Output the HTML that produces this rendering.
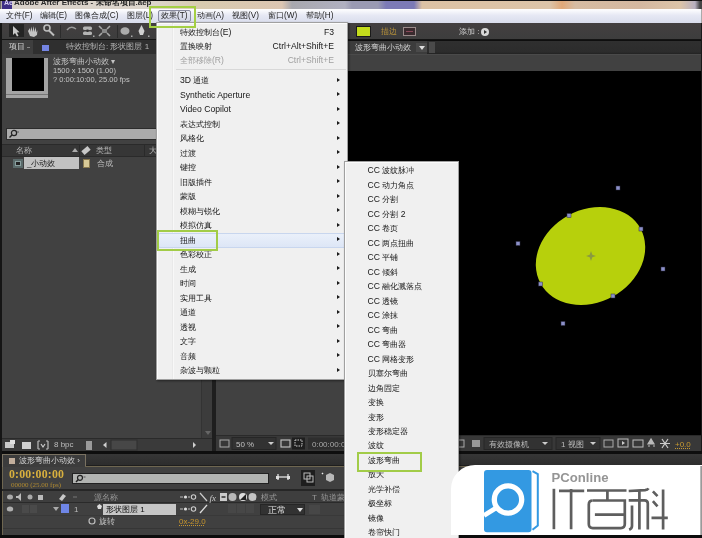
<!DOCTYPE html>
<html><head><meta charset="utf-8">
<style>
*{margin:0;padding:0;box-sizing:border-box}
html,body{width:702px;height:538px;overflow:hidden;background:#262626;font-family:"Liberation Sans",sans-serif}
body{will-change:transform}
.a{position:absolute}
.t{position:absolute;white-space:nowrap;line-height:1}
.mb{position:absolute;white-space:nowrap;line-height:10px;font-size:8.2px;color:#1e1e1e;top:11px}
.mb .c{font-size:8px}
.pan{background:#414141}
.menu{background:#f0f0f0;border:1px solid #a0a0a0;box-shadow:inset 1px 1px 0 #fcfcfc,1px 1px 2px rgba(0,0,0,.45)}
.mt{position:absolute;white-space:nowrap;line-height:10px;font-size:8.6px;color:#161616}
.c{font-size:7.7px}
.arr{position:absolute;width:0;height:0;border-left:3px solid #1a1a1a;border-top:2.2px solid transparent;border-bottom:2.2px solid transparent}
.g{position:absolute;white-space:nowrap;line-height:10px;font-size:8px;color:#c4c4c4}
.g .c{font-size:7.5px}
.ic{position:absolute;background:#bdbdbd}
</style></head><body>
<!-- ============ TITLE BAR ============ -->
<div class="a" style="left:0;top:0;width:702px;height:9px;background:linear-gradient(90deg,#4a4a4a 0px,#d8d0c8 2px,#ddd6cc 150px,#d8cbb0 200px,#dcc6b2 282px,#a8a8ae 292px,#b0b0c0 345px,#9a9ab2 352px,#9a9ab2 378px,#7c7ab6 386px,#7c7ab6 414px,#dcc2a4 422px,#dcc4a8 550px,#e0a878 562px,#d6bca2 575px,#d4b8a0 640px,#dcc4a8 680px,#b8b0c0 695px,#444 700px)"></div>
<div class="a" style="left:0;top:0;width:702px;height:1px;background:#111"></div>
<div class="a" style="left:2px;top:1px;width:10px;height:8px;background:#3e2f86"></div>
<div class="t" style="left:4px;top:-1px;font-size:7px;color:#d8d0f0;font-weight:bold">Ae</div>
<div class="t" style="left:14px;top:-1.5px;font-size:8px;color:#2a2a2a;font-weight:bold">Adobe After Effects - <span style="font-size:7.5px">未命名项目</span>.aep</div>

<!-- ============ MENU BAR ============ -->
<div class="a" style="left:0;top:9px;width:702px;height:14px;background:linear-gradient(#ffffff,#e6e8f4 45%,#d9ddec)"></div>
<div class="a" style="left:701px;top:9px;width:1px;height:14px;background:#aaa"></div>
<div class="a" style="left:158px;top:10px;width:33px;height:12px;background:linear-gradient(#e8eaf4,#cfd3e4);border:1px solid #8a8ca0;border-radius:2px"></div>
<div class="mb" style="left:6px"><span class="c">文件</span>(F)</div>
<div class="mb" style="left:40px"><span class="c">编辑</span>(E)</div>
<div class="mb" style="left:75px"><span class="c">图像合成</span>(C)</div>
<div class="mb" style="left:127px"><span class="c">图层</span>(L)</div>
<div class="mb" style="left:161px"><span class="c">效果</span>(T)</div>
<div class="mb" style="left:197px"><span class="c">动画</span>(A)</div>
<div class="mb" style="left:232px"><span class="c">视图</span>(V)</div>
<div class="mb" style="left:268px"><span class="c">窗口</span>(W)</div>
<div class="mb" style="left:306px"><span class="c">帮助</span>(H)</div>

<!-- ============ TOOLBAR ============ -->
<div class="a" style="left:0;top:23px;width:702px;height:17px;background:linear-gradient(#433f40,#3d3d3d);border-bottom:1px solid #141414"></div>
<div class="a" style="left:9px;top:24px;width:15px;height:13px;background:#242424"></div>
<svg class="a" style="left:0;top:23px" width="160" height="17">
<path d="M13 3 L13 12 L15 10 L17 13.5 L18.5 12.8 L16.8 9.5 L19.5 9.3 Z" fill="#c8c8c8"/>
<path d="M28 8 L30 5 L30.5 9 L31.5 3.5 L32.5 9 L33.5 3 L34.5 9 L35.5 4 L36.5 9.5 L37.5 7 L37 12 L34 14 L30 13 Z" fill="#c4c4c4"/>
<circle cx="47" cy="5" r="3" stroke="#bdbdbd" stroke-width="1.6" fill="none"/>
<path d="M49 7.5 L54 12.5" stroke="#bdbdbd" stroke-width="2"/>
<rect x="60" y="2" width="1" height="13" fill="#2c2c2c"/>
<path d="M67 7 Q71 2 76 6" stroke="#9a9a9a" stroke-width="1.5" fill="none"/>
<rect x="83" y="3.5" width="9" height="3.5" rx="1.5" fill="#b4b4b4"/><rect x="83" y="8.5" width="9" height="3.5" rx="1.5" fill="#b4b4b4"/><rect x="86.5" y="6.5" width="2" height="2.5" fill="#333"/>
<path d="M99 3 l3 3 M110 3 l-3 3 M99 13 l3 -3 M110 13 l-3 -3" stroke="#a8a8a8" stroke-width="1.6"/>
<rect x="102" y="6" width="5" height="4" fill="#888"/>
<rect x="117" y="2" width="1" height="13" fill="#2c2c2c"/>
<ellipse cx="125" cy="8" rx="4.5" ry="3.8" fill="#ababab"/>
<path d="M141.5 2 L144.5 8 L143 12 L140 12 L138.5 8 Z" fill="#d0d0d0"/>
<rect x="93" y="12.5" width="1.5" height="1.5" fill="#aaa"/><rect x="131" y="12.5" width="1.5" height="1.5" fill="#aaa"/><rect x="148" y="12.5" width="1.5" height="1.5" fill="#aaa"/>
</svg>
<!-- right part of toolbar -->
<div class="a" style="left:356px;top:26px;width:15px;height:11px;background:#c4dc1c;border:1px solid #1a1a1a"></div>
<div class="t" style="left:381px;top:28px;font-size:7.5px;color:#b8923a">描边</div>
<div class="a" style="left:403px;top:27px;width:13px;height:9px;border:1px solid #9a8a8a;background:#3a2a2e"></div>
<div class="a" style="left:406px;top:31px;width:7px;height:1px;background:#8a4a5a"></div>
<div class="g" style="left:459px;top:27px;color:#cfcfcf"><span class="c" style="font-size:8px">添加</span> :</div>
<div class="a" style="left:481px;top:28px;width:8px;height:8px;border-radius:50%;background:#d8d8d8"></div>
<div class="a" style="left:484px;top:30px;width:0;height:0;border-left:3px solid #333;border-top:2px solid transparent;border-bottom:2px solid transparent"></div>

<div class="a" style="left:0;top:23px;width:2px;height:515px;background:#151515"></div>

<!-- ============ PROJECT PANEL ============ -->
<div class="a pan" style="left:2px;top:40px;width:210px;height:412px"></div>
<div class="a" style="left:2px;top:40px;width:210px;height:14px;background:#2f2f2f"></div>
<div class="a" style="left:2px;top:40px;width:31px;height:14px;background:#3e3e3e"></div>
<div class="g" style="left:9px;top:42px;color:#d4d4d4"><span class="c" style="font-size:8px">项目</span></div>
<div class="a" style="left:27px;top:47px;width:3px;height:1px;background:#888"></div>
<div class="a" style="left:42px;top:45px;width:7px;height:6px;background:#7484e2"></div>
<div class="g" style="left:66px;top:42px;color:#b4b4b4"><span class="c" style="font-size:8px">特效控制台: 形状图层</span> 1</div>
<!-- thumbnail -->
<div class="a" style="left:6px;top:58px;width:42px;height:40px;background:#a4a4a4"></div>
<div class="a" style="left:12px;top:58px;width:32px;height:33px;background:#000"></div>
<div class="a" style="left:6px;top:94px;width:42px;height:1px;background:#777"></div>
<div class="g" style="left:53px;top:57px"><span class="c" style="font-size:8px">波形弯曲小动效</span> ▾</div>
<div class="g" style="left:53px;top:66px;font-size:7.5px">1500 x 1500 (1.00)</div>
<div class="g" style="left:53px;top:74.5px;font-size:7.5px">? 0:00:10:00, 25.00 fps</div>
<!-- search -->
<div class="a" style="left:6px;top:128px;width:206px;height:12px;background:#ababab;border:1px solid #2c2c2c"></div>
<svg class="a" style="left:8px;top:129px" width="12" height="10"><circle cx="6" cy="4" r="2.6" stroke="#222" stroke-width="1.2" fill="none"/><path d="M4.2 5.8 L1.5 8.5" stroke="#222" stroke-width="1.4"/><path d="M9 3 h2" stroke="#555" stroke-width="1"/></svg>
<!-- column header -->
<div class="a" style="left:2px;top:144px;width:210px;height:13px;background:#363636;border-top:1px solid #2a2a2a;border-bottom:1px solid #2a2a2a"></div>
<div class="g" style="left:16px;top:146px;color:#b8b8b8"><span class="c">名称</span></div>
<div class="a" style="left:72px;top:148px;width:0;height:0;border-bottom:4px solid #aaa;border-left:3px solid transparent;border-right:3px solid transparent"></div>
<div class="a" style="left:79px;top:145px;width:1px;height:11px;background:#2a2a2a"></div>
<div class="a" style="left:82px;top:148px;width:8px;height:5px;background:#c8c8c8;transform:rotate(-40deg)"></div>
<div class="g" style="left:96px;top:146px;color:#b8b8b8"><span class="c">类型</span></div>
<div class="a" style="left:144px;top:145px;width:1px;height:11px;background:#2a2a2a"></div>
<div class="g" style="left:149px;top:146px;color:#b8b8b8"><span class="c">大</span></div>
<!-- row -->
<div class="a" style="left:13px;top:159px;width:10px;height:9px;background:#8aa0a0;border:2px solid #5a6a6a"></div>
<div class="a" style="left:16px;top:162px;width:4px;height:3px;background:#222"></div>
<div class="a" style="left:24px;top:157px;width:55px;height:12px;background:#c2c2c2"></div>
<div class="g" style="left:27px;top:158.5px;color:#1a1a1a"><span class="c" style="font-size:8px">_小动效</span></div>
<div class="a" style="left:83px;top:159px;width:7px;height:9px;background:#d8ca98;border:1px solid #8a7a50"></div>
<div class="g" style="left:97px;top:158.5px;color:#bcbcbc"><span class="c" style="font-size:8px">合成</span></div>
<!-- bottom bar -->
<div class="a" style="left:2px;top:438px;width:210px;height:14px;background:#3a3a3a;border-top:1px solid #2a2a2a"></div>
<div class="a" style="left:201px;top:54px;width:11px;height:384px;background:#3c3c3c;border-left:1px solid #333"></div>
<div class="a" style="left:205px;top:431px;width:0;height:0;border-top:4px solid #666;border-left:3px solid transparent;border-right:3px solid transparent"></div>
<svg class="a" style="left:2px;top:438px" width="210" height="14">
<rect x="3" y="4" width="9" height="6" fill="#c8c8c8"/><rect x="8" y="2" width="5" height="4" fill="#e0e0e0"/>
<rect x="20" y="4" width="9" height="7" fill="#cfcfcf"/>
<path d="M36 3 v8 M36 3 h2 M36 11 h2 M46 3 v8 M46 3 h-2 M46 11 h-2" stroke="#bbb" stroke-width="1.2"/><path d="M39 6 l2 3 l2 -3" stroke="#ccc" stroke-width="1.2" fill="none"/>
<rect x="84" y="3" width="6" height="9" fill="#9a9a9a"/>
<path d="M101 7 l3.5 -3 v6 z" fill="#cfcfcf"/>
<rect x="109" y="2" width="26" height="10" fill="#474747" stroke="#2e2e2e" stroke-width="1"/>
<path d="M191 4 l3 3 l-3 3 z" fill="#cfcfcf"/>
</svg>
<div class="g" style="left:54px;top:440px;color:#bdbdbd">8 bpc</div>
<div class="a" style="left:212px;top:40px;width:4px;height:412px;background:#1e1e1e"></div>

<!-- ============ COMP PANEL ============ -->
<div class="a pan" style="left:216px;top:40px;width:486px;height:396px"></div>
<div class="a" style="left:216px;top:40px;width:486px;height:14px;background:linear-gradient(#0e0e0e 0,#0e0e0e 1px,#2f2f2f 1px,#2c2c2c 12px,#222 14px)"></div>
<div class="a" style="left:216px;top:54px;width:486px;height:1px;background:#4a4a4a"></div>
<div class="a" style="left:348px;top:41px;width:79px;height:13px;background:#3c3c3c"></div>
<div class="g" style="left:355px;top:43px;color:#d2d2d2"><span class="c" style="font-size:8px">波形弯曲小动效</span></div>
<div class="a" style="left:416px;top:43px;width:11px;height:9px;background:#4a4a4a"></div>
<div class="a" style="left:419px;top:46px;width:0;height:0;border-top:4px solid #ddd;border-left:3px solid transparent;border-right:3px solid transparent"></div>
<div class="a" style="left:429px;top:42px;width:6px;height:11px;background:#4a4a4a"></div>
<div class="a" style="left:346px;top:71px;width:356px;height:364px;background:#000"></div>
<!-- comp bottom toolbar -->
<div class="a" style="left:216px;top:435px;width:486px;height:16px;background:#383838;border-top:1px solid #2a2a2a"></div>
<svg class="a" style="left:216px;top:436px" width="486" height="15">
<rect x="4" y="4" width="9" height="7" fill="none" stroke="#aaa" stroke-width="1"/>
<rect x="16" y="1.5" width="44" height="12" fill="#323232" stroke="#262626"/>
<path d="M52 6 l3 3 l3 -3 z" fill="#ccc"/>
<rect x="65" y="4" width="9" height="7" fill="none" stroke="#bbb" stroke-width="1.2"/>
<rect x="76" y="1.5" width="13" height="12" fill="#1e1e1e"/>
<rect x="79" y="4" width="7" height="6" fill="none" stroke="#ccc" stroke-width="1" stroke-dasharray="1.5 1"/>
<rect x="92" y="1.5" width="40" height="12" fill="#2e2e2e"/>
<rect x="241" y="4" width="7" height="7" fill="none" stroke="#aaa" stroke-width="1"/>
<rect x="256" y="4" width="8" height="7" fill="#999"/>
<rect x="268" y="1.5" width="68" height="12" fill="#323232" stroke="#262626"/>
<path d="M326 6 l3 3 l3 -3 z" fill="#ccc"/>
<rect x="340" y="1.5" width="44" height="12" fill="#323232" stroke="#262626"/>
<path d="M374 6 l3 3 l3 -3 z" fill="#ccc"/>
<rect x="388" y="4" width="9" height="7" fill="none" stroke="#aaa" stroke-width="1"/>
<rect x="402" y="3" width="10" height="8" fill="none" stroke="#bbb" stroke-width="1"/>
<path d="M406 5 l3 2 l-3 2 z" fill="#ccc"/>
<rect x="417" y="4" width="10" height="7" fill="none" stroke="#bbb" stroke-width="1"/>
<path d="M435 3 l-3 5 h6 z M432 10 h2 M437 10 h2" stroke="#bbb" stroke-width="1.2" fill="#bbb"/>
<path d="M446 3 l6 9 M452 3 l-6 9 M444 7.5 h10" stroke="#ccc" stroke-width="1.2"/>
</svg>
<div class="g" style="left:236px;top:440px;color:#c0c0c0">50 %</div>
<div class="g" style="left:312px;top:440px;color:#a8a8a8">0:00:00:0</div>
<div class="g" style="left:489px;top:440px;color:#bcbcbc"><span class="c" style="font-size:8px">有效摄像机</span></div>
<div class="g" style="left:561px;top:440px;color:#bcbcbc">1 <span class="c" style="font-size:8px">视图</span></div>
<div class="g" style="left:675px;top:440px;color:#c89a30;text-decoration:underline dotted">+0.0</div>
<div class="a" style="left:701px;top:23px;width:1px;height:442px;background:#1a1a1a"></div>

<!-- ============ TIMELINE ============ -->
<div class="a" style="left:2px;top:451px;width:700px;height:3px;background:#0e0e0e"></div>
<div class="a" style="left:2px;top:454px;width:700px;height:12px;background:linear-gradient(#363636,#2c2c2c)"></div>
<div class="a" style="left:86px;top:465px;width:616px;height:1px;background:#1e1e1e"></div>
<div class="a" style="left:2px;top:454px;width:84px;height:13px;background:#3c3c3c;border:1px solid #7a7262;border-bottom:none"></div>
<div class="a" style="left:9px;top:458px;width:6px;height:6px;background:#c2ae9c"></div>
<div class="g" style="left:19px;top:456px;color:#d0d0d0"><span class="c" style="font-size:8px">波形弯曲小动效</span> ›</div>
<div class="a" style="left:85px;top:466px;width:617px;height:1px;background:#6e6650"></div>
<div class="a" style="left:2px;top:467px;width:698px;height:68px;background:#404040;border-left:1px solid #6e6650"></div>
<div class="a" style="left:3px;top:528px;width:697px;height:1px;background:#363636"></div>
<div class="a" style="left:3px;top:515px;width:697px;height:1px;background:#393939"></div>
<div class="t" style="left:9px;top:469px;font-size:11.8px;font-family:'Liberation Serif',serif;font-weight:bold;color:#d8b03e;letter-spacing:0.2px">0:00:00:00</div>
<div class="t" style="left:11px;top:481.5px;font-size:7px;font-family:'Liberation Serif',serif;color:#b08a30">00000 (25.00 fps)</div>
<div class="a" style="left:72px;top:473px;width:197px;height:11px;background:#b2b4b2;border:1px solid #222"></div>
<svg class="a" style="left:74px;top:474px" width="14" height="9"><circle cx="6" cy="3.8" r="2.5" stroke="#222" stroke-width="1.2" fill="none"/><path d="M4.3 5.5 L2 8" stroke="#222" stroke-width="1.4"/><path d="M9.5 3 h2" stroke="#555"/></svg>
<svg class="a" style="left:270px;top:468px" width="70" height="20">
<path d="M8 6 v6 M18 6 v6 M8 9 h10" stroke="#ccc" stroke-width="1.5"/><rect x="6" y="8" width="3" height="3" fill="#ddd"/><rect x="17" y="8" width="3" height="3" fill="#ddd"/>
<rect x="31" y="2" width="14" height="16" fill="#1e1e1e"/>
<rect x="34" y="5" width="6" height="6" fill="none" stroke="#bbb"/><rect x="37" y="8" width="6" height="6" fill="none" stroke="#bbb"/>
<path d="M52 5 l1 1" stroke="#eee" stroke-width="1.5"/>
<path d="M56 7 l4 -2 l4 2 v5 l-4 2 l-4 -2 z" fill="#b8b8b8"/>
</svg>
<div class="a" style="left:2px;top:489px;width:698px;height:2px;background:#262626"></div>
<div class="a" style="left:3px;top:491px;width:697px;height:12px;background:#3e3e3e;border-bottom:1px solid #2a2a2a"></div>
<svg class="a" style="left:2px;top:491px" width="345" height="44">
<ellipse cx="8" cy="6" rx="3" ry="2.5" fill="#aaa"/>
<path d="M14 5 h2 l3 -3 v8 l-3 -3 h-2 z" fill="#bbb"/>
<circle cx="28" cy="6" r="2.5" fill="#aaa"/>
<rect x="36" y="4" width="5" height="5" fill="#bbb"/>
<path d="M57 8 l4 -5 l3 2 l-4 5 z" fill="#c8c8c8"/>
<path d="M71 6 h4" stroke="#777"/>
<path d="M178 6 h3 M186 6 h2" stroke="#bbb" stroke-width="1"/><circle cx="183.5" cy="6" r="1.6" fill="#ddd"/>
<circle cx="191.5" cy="6" r="2.2" fill="none" stroke="#ccc" stroke-width="1.1"/>
<path d="M198 2 l7 8" stroke="#ccc" stroke-width="1.2"/>
<text x="207.5" y="9.5" font-size="9" font-style="italic" fill="#ccc" font-family="Liberation Serif">fx</text>
<rect x="218" y="2" width="7" height="8" fill="#ccc"/><rect x="219.5" y="5" width="4" height="2" fill="#555"/>
<circle cx="230.5" cy="6" r="4" fill="#b8b8b8"/><circle cx="241" cy="6" r="4" fill="#ddd"/><path d="M238 9 l6 -6 v6 z" fill="#222"/><circle cx="250.5" cy="6" r="4" fill="#c4c4c4"/>
<!-- layer row -->
<ellipse cx="8" cy="18" rx="3.2" ry="2.5" fill="#b0b0b0"/>
<rect x="20" y="14" width="7" height="8" fill="#4a4a4a"/><rect x="28" y="14" width="7" height="8" fill="#4a4a4a"/>
<path d="M51 16 l3 4 l3 -4 z" fill="#aaa"/>
<rect x="59" y="13" width="8" height="9" fill="#6f86e6"/>
<path d="M95 15 l2.5 -2 l2.5 2 l-1 3 h-3 z" fill="#ddd"/>
<path d="M178 18 h3 M186 18 h2" stroke="#bbb" stroke-width="1"/><circle cx="183.5" cy="18" r="1.6" fill="#ddd"/>
<circle cx="191.5" cy="18" r="2.2" fill="none" stroke="#ccc" stroke-width="1.1"/>
<path d="M198 22 l7 -8" stroke="#ddd" stroke-width="1.3"/>
<rect x="226" y="13" width="8" height="9" fill="#474747"/><rect x="235" y="13" width="8" height="9" fill="#474747"/><rect x="244" y="13" width="8" height="9" fill="#474747"/>
<circle cx="90" cy="30" r="3" fill="none" stroke="#bbb" stroke-width="1.2"/>
</svg>
<div class="g" style="left:94px;top:493px;color:#9a9a9a"><span class="c">源名称</span></div>
<div class="g" style="left:261px;top:493px;color:#9a9a9a"><span class="c">模式</span></div>
<div class="g" style="left:312px;top:493px;color:#9a9a9a">T &nbsp;<span class="c">轨道蒙版</span></div>
<div class="g" style="left:74px;top:505px;color:#bbb">1</div>
<div class="a" style="left:103px;top:504px;width:73px;height:11px;background:#c6c6c6"></div>
<div class="g" style="left:106px;top:505px;color:#111"><span class="c" style="font-size:8px">形状图层</span> 1</div>
<div class="a" style="left:260px;top:504px;width:45px;height:11px;background:#323232;border:1px solid #262626"></div>
<div class="g" style="left:268px;top:505px;color:#ddd"><span class="c" style="font-size:8.5px">正常</span></div>
<div class="a" style="left:297px;top:508px;width:0;height:0;border-top:4px solid #ddd;border-left:3px solid transparent;border-right:3px solid transparent"></div>
<div class="a" style="left:309px;top:505px;width:11px;height:9px;background:#474747"></div>
<div class="g" style="left:99px;top:517px;color:#c8c8c8"><span class="c" style="font-size:8px">旋转</span></div>
<div class="g" style="left:179px;top:517px;color:#c8962c;text-decoration:underline dotted">0x-29.0</div>
<div class="a" style="left:0;top:535px;width:702px;height:3px;background:#0c0c0c"></div>

<!-- ============ ELLIPSE ============ -->
<svg class="a" style="left:0;top:0" width="702" height="538">
<ellipse cx="590.5" cy="256" rx="57" ry="46.3" transform="rotate(-28.8 590.5 256)" fill="#b7d00c"/>
<g fill="#8c90c8" stroke="#2a2a40" stroke-width="0.5">
<rect x="616" y="186" width="4" height="4"/><rect x="661" y="267" width="4" height="4"/>
<rect x="561" y="321.5" width="4" height="4"/><rect x="516" y="241.5" width="4" height="4"/>
<rect x="639" y="227" width="4" height="4"/><rect x="611" y="294" width="4" height="4"/>
<rect x="538.5" y="282" width="4" height="4"/><rect x="567" y="213.5" width="4" height="4"/>
</g>
<path d="M591 251 l1.3 3.7 l3.7 1.3 l-3.7 1.3 l-1.3 3.7 l-1.3 -3.7 l-3.7 -1.3 l3.7 -1.3 z" fill="#8a9a40"/>
</svg>

<!-- ============ MAIN MENU ============ -->
<div class="a menu" style="left:156px;top:22px;width:192px;height:358px"></div>
<div class="a" style="left:172px;top:23px;width:1px;height:356px;background:#e9e9e9"></div><div class="a" style="left:173px;top:23px;width:1px;height:356px;background:#f8f8f8"></div>
<div class="a" style="left:176px;top:69px;width:170px;height:1px;background:#d8d8d8"></div>
<div class="a" style="left:158px;top:233px;width:188px;height:15px;background:linear-gradient(#eaf0fa,#dde6f6);border:1px solid #c8d6ee;border-radius:2px"></div>
<!-- ============ SUBMENU ============ -->
<div class="a menu" style="left:344px;top:161px;width:115px;height:380px"></div>

<div class="mt" style="left:180px;top:26.5px"><span class="c">特效控制台</span>(E)</div>
<div class="mt" style="right:368px;top:26.5px">F3</div>
<div class="mt" style="left:180px;top:40.8px"><span class="c">置换映射</span></div>
<div class="mt" style="right:368px;top:40.8px">Ctrl+Alt+Shift+E</div>
<div class="mt" style="left:180px;top:55.3px;color:#a0a0a0"><span class="c">全部移除</span>(R)</div>
<div class="mt" style="right:368px;top:55.3px;color:#a0a0a0">Ctrl+Shift+E</div>
<div class="mt" style="left:180px;top:75.0px">3D <span class="c">通道</span></div>
<div class="arr" style="left:337px;top:77.6px"></div>
<div class="mt" style="left:180px;top:89.5px">Synthetic Aperture</div>
<div class="arr" style="left:337px;top:92.1px"></div>
<div class="mt" style="left:180px;top:104.0px">Video Copilot</div>
<div class="arr" style="left:337px;top:106.6px"></div>
<div class="mt" style="left:180px;top:118.5px"><span class="c">表达式控制</span></div>
<div class="arr" style="left:337px;top:121.1px"></div>
<div class="mt" style="left:180px;top:133.0px"><span class="c">风格化</span></div>
<div class="arr" style="left:337px;top:135.6px"></div>
<div class="mt" style="left:180px;top:147.5px"><span class="c">过渡</span></div>
<div class="arr" style="left:337px;top:150.1px"></div>
<div class="mt" style="left:180px;top:162.0px"><span class="c">键控</span></div>
<div class="arr" style="left:337px;top:164.6px"></div>
<div class="mt" style="left:180px;top:176.5px"><span class="c">旧版插件</span></div>
<div class="arr" style="left:337px;top:179.1px"></div>
<div class="mt" style="left:180px;top:191.0px"><span class="c">蒙版</span></div>
<div class="arr" style="left:337px;top:193.6px"></div>
<div class="mt" style="left:180px;top:205.5px"><span class="c">模糊与锐化</span></div>
<div class="arr" style="left:337px;top:208.1px"></div>
<div class="mt" style="left:180px;top:220.0px"><span class="c">模拟仿真</span></div>
<div class="arr" style="left:337px;top:222.6px"></div>
<div class="mt" style="left:180px;top:234.5px"><span class="c">扭曲</span></div>
<div class="arr" style="left:337px;top:237.1px"></div>
<div class="mt" style="left:180px;top:249.0px"><span class="c">色彩校正</span></div>
<div class="arr" style="left:337px;top:251.6px"></div>
<div class="mt" style="left:180px;top:263.5px"><span class="c">生成</span></div>
<div class="arr" style="left:337px;top:266.1px"></div>
<div class="mt" style="left:180px;top:278.0px"><span class="c">时间</span></div>
<div class="arr" style="left:337px;top:280.6px"></div>
<div class="mt" style="left:180px;top:292.5px"><span class="c">实用工具</span></div>
<div class="arr" style="left:337px;top:295.1px"></div>
<div class="mt" style="left:180px;top:307.0px"><span class="c">通道</span></div>
<div class="arr" style="left:337px;top:309.6px"></div>
<div class="mt" style="left:180px;top:321.5px"><span class="c">透视</span></div>
<div class="arr" style="left:337px;top:324.1px"></div>
<div class="mt" style="left:180px;top:336.0px"><span class="c">文字</span></div>
<div class="arr" style="left:337px;top:338.6px"></div>
<div class="mt" style="left:180px;top:350.5px"><span class="c">音频</span></div>
<div class="arr" style="left:337px;top:353.1px"></div>
<div class="mt" style="left:180px;top:365.0px"><span class="c">杂波与颗粒</span></div>
<div class="arr" style="left:337px;top:367.6px"></div>
<div class="mt" style="left:367.5px;top:165.3px">CC <span class="c">波纹脉冲</span></div>
<div class="mt" style="left:367.5px;top:179.8px">CC <span class="c">动力角点</span></div>
<div class="mt" style="left:367.5px;top:194.3px">CC <span class="c">分割</span></div>
<div class="mt" style="left:367.5px;top:208.7px">CC <span class="c">分割</span> 2</div>
<div class="mt" style="left:367.5px;top:223.2px">CC <span class="c">卷页</span></div>
<div class="mt" style="left:367.5px;top:237.7px">CC <span class="c">两点扭曲</span></div>
<div class="mt" style="left:367.5px;top:252.2px">CC <span class="c">平铺</span></div>
<div class="mt" style="left:367.5px;top:266.7px">CC <span class="c">倾斜</span></div>
<div class="mt" style="left:367.5px;top:281.1px">CC <span class="c">融化溅落点</span></div>
<div class="mt" style="left:367.5px;top:295.6px">CC <span class="c">透镜</span></div>
<div class="mt" style="left:367.5px;top:310.1px">CC <span class="c">涂抹</span></div>
<div class="mt" style="left:367.5px;top:324.6px">CC <span class="c">弯曲</span></div>
<div class="mt" style="left:367.5px;top:339.1px">CC <span class="c">弯曲器</span></div>
<div class="mt" style="left:367.5px;top:353.5px">CC <span class="c">网格变形</span></div>
<div class="mt" style="left:367.5px;top:368.0px"><span class="c">贝塞尔弯曲</span></div>
<div class="mt" style="left:367.5px;top:382.5px"><span class="c">边角固定</span></div>
<div class="mt" style="left:367.5px;top:397.0px"><span class="c">变换</span></div>
<div class="mt" style="left:367.5px;top:411.5px"><span class="c">变形</span></div>
<div class="mt" style="left:367.5px;top:425.9px"><span class="c">变形稳定器</span></div>
<div class="mt" style="left:367.5px;top:440.4px"><span class="c">波纹</span></div>
<div class="mt" style="left:367.5px;top:454.9px"><span class="c">波形弯曲</span></div>
<div class="mt" style="left:367.5px;top:469.4px"><span class="c">放大</span></div>
<div class="mt" style="left:367.5px;top:483.9px"><span class="c">光学补偿</span></div>
<div class="mt" style="left:367.5px;top:498.3px"><span class="c">极坐标</span></div>
<div class="mt" style="left:367.5px;top:512.8px"><span class="c">镜像</span></div>
<div class="mt" style="left:367.5px;top:527.3px"><span class="c">卷帘快门</span></div>

<!-- ============ LOGO CARD ============ -->
<div class="a" style="left:451px;top:465px;width:251px;height:70px;background:#fff;border-top-left-radius:24px"></div>
<div class="a" style="left:700px;top:466px;width:2px;height:69px;background:linear-gradient(90deg,#c8c8c8,#8a8a8a)"></div>
<svg class="a" style="left:451px;top:465px" width="251" height="70">
<rect x="33" y="5" width="47.5" height="62.3" rx="3" fill="#3399e2"/>
<path d="M81.5 6.2 L86.8 9 L86.8 60.5 L81.5 64.8" fill="none" stroke="#3399e2" stroke-width="2"/>
<circle cx="57" cy="34.5" r="13.7" fill="none" stroke="#fff" stroke-width="5.3"/>
<path d="M45 43 L33 50.5" stroke="#fff" stroke-width="4.8"/>
<text x="100.5" y="16.8" font-size="13.2" font-weight="bold" fill="#959595" font-family="Liberation Sans" textLength="57" lengthAdjust="spacingAndGlyphs">PConline</text>
<g fill="none" stroke="#5e5e5e" stroke-width="2.7">
<path d="M102.9 23.8 V64.2"/>
<path d="M108 25.9 H133.2 M120.1 24 V64.2"/>
<path d="M136 25.5 H175.5 M156.4 25.5 V35.5 M142 35.5 H173.8 V59 Q173.8 63.1 169.8 63.1 H141.8 Q137.8 63.1 137.8 59 V39.5 Q137.8 35.5 141.8 35.5 M143.9 49.7 H175"/>
<path d="M177.7 26 L194 25.2 Q196.5 25 197.5 23.4 M177.7 35.3 H193.5 Q196.8 35.3 196.8 38.6 V64.5 M188.4 24.6 V64.5 M181 40.4 V61 Q181 63.5 178.2 64.8"/>
<path d="M201.9 26.4 L206.5 31.1 M201.9 36.2 L206.5 41.3 M200.5 52.9 H216.8 M212.1 24.6 V64.5"/>
</g>
</svg>

<!-- green highlight boxes -->
<div class="a" style="left:149px;top:6px;width:47px;height:21.5px;border:2px solid #a4cf44"></div>
<div class="a" style="left:157px;top:230px;width:61px;height:21px;border:2px solid #a2cc48"></div>
<div class="a" style="left:357px;top:452px;width:65px;height:20px;border:2px solid #a2cc48"></div>
</body></html>
